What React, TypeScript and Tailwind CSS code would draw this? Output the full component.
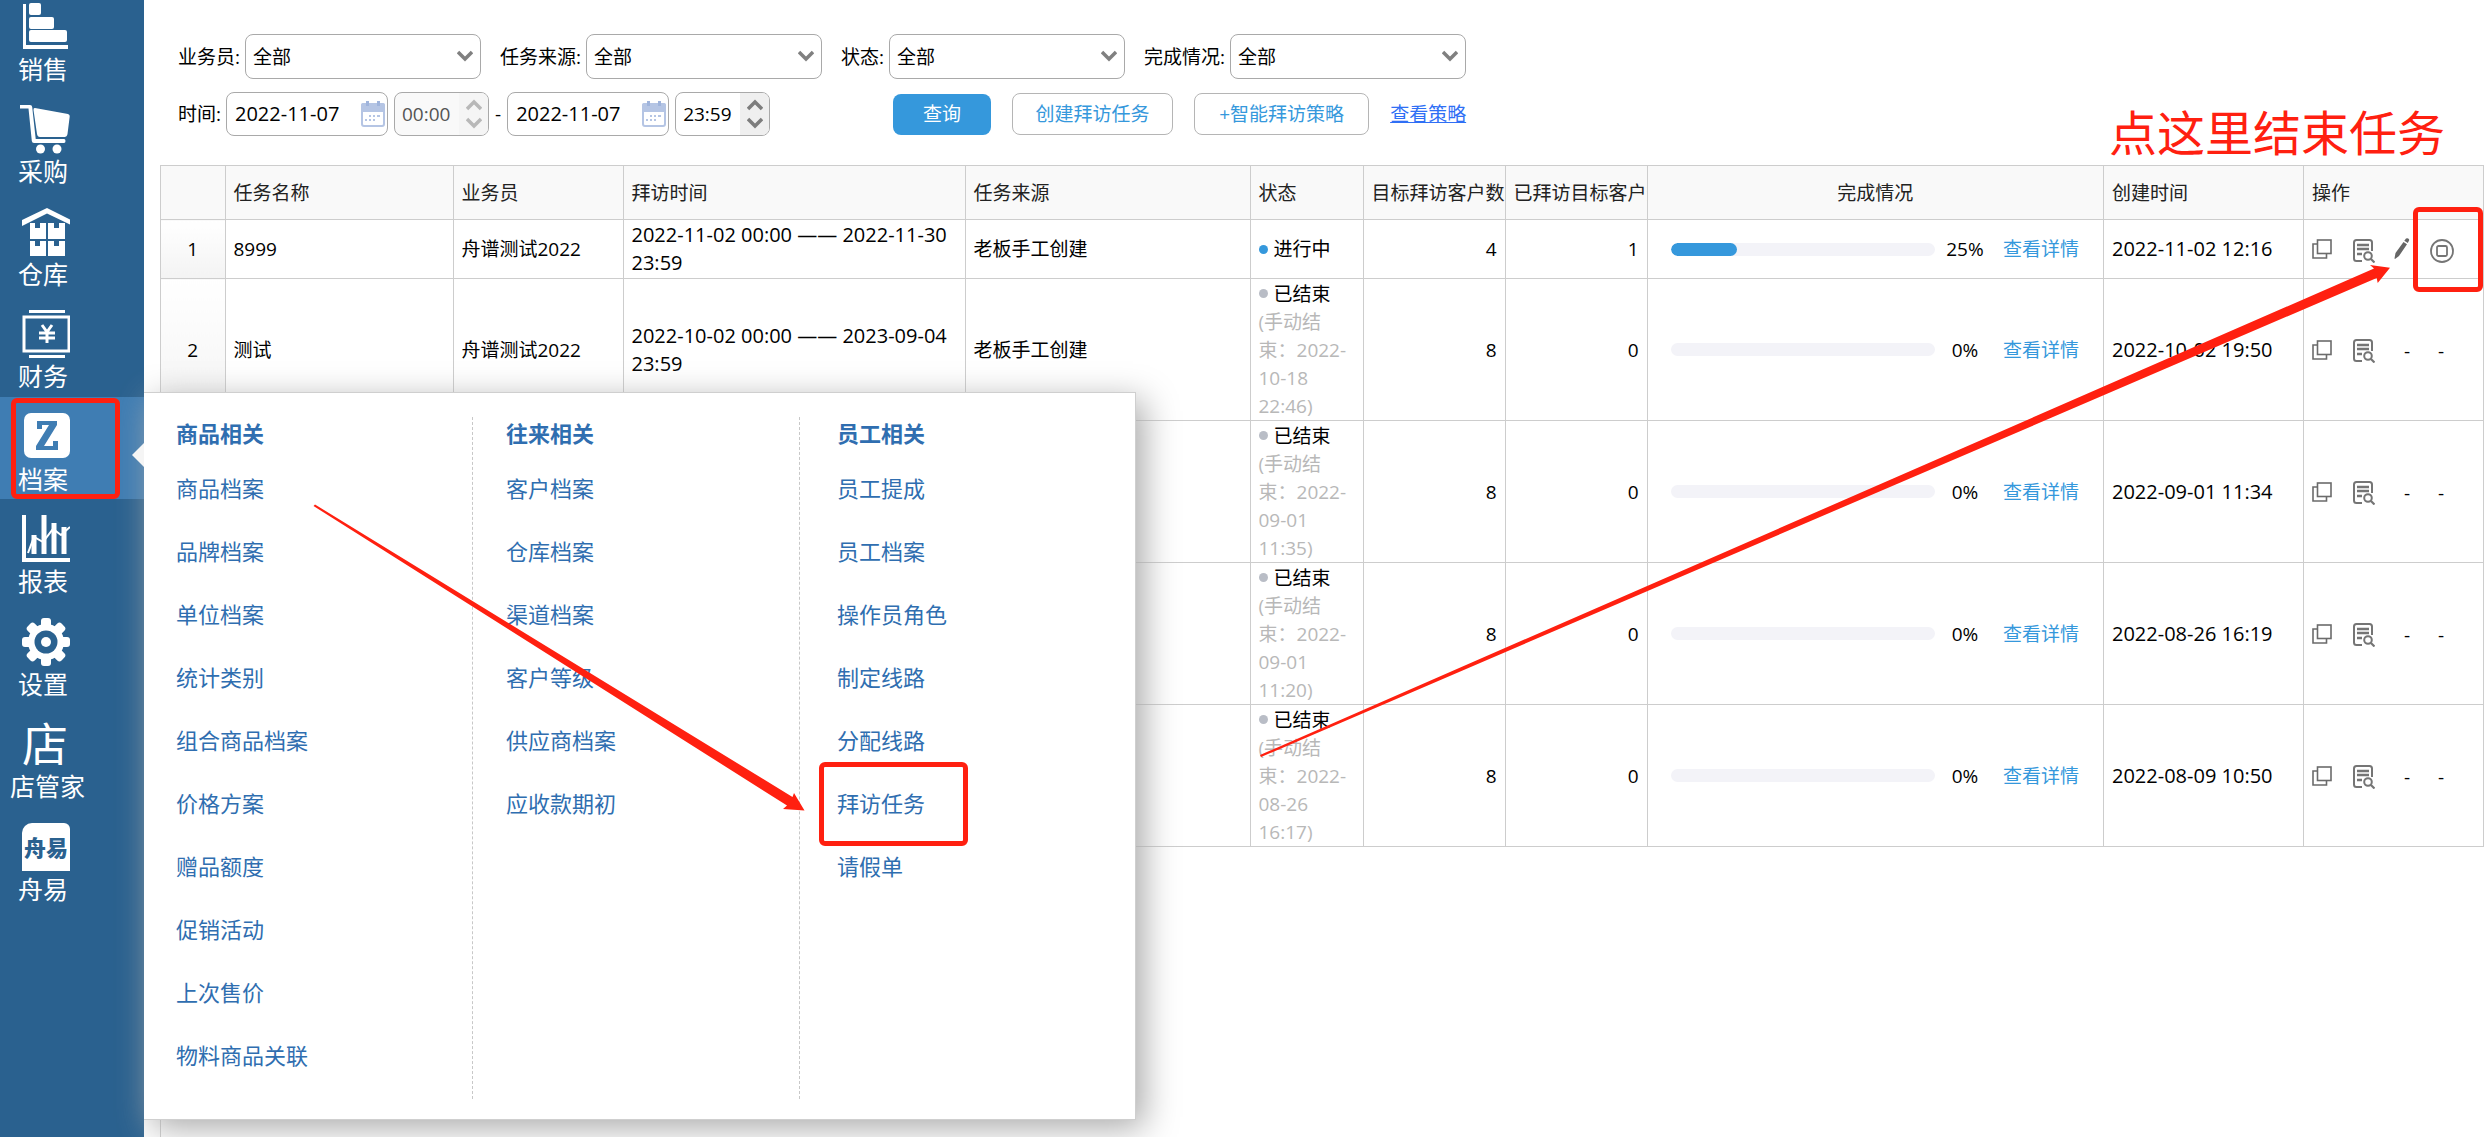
import React from 'react';

type Row = {
    id: number;
    name?: string;
    staff?: string;
    period?: string;
    source?: string;
    ended?: string;
    target: number;
    visited: number;
    percent: number;
    createdAt: string;
};

const rows: Row[] = [
    { id: 1, name: '8999', staff: '舟谱测试2022', period: '2022-11-02 00:00 —— 2022-11-30 23:59', source: '老板手工创建', target: 4, visited: 1, percent: 25, createdAt: '2022-11-02 12:16' },
    { id: 2, name: '测试', staff: '舟谱测试2022', period: '2022-10-02 00:00 —— 2023-09-04 23:59', source: '老板手工创建', ended: '2022-10-18 22:46', target: 8, visited: 0, percent: 0, createdAt: '2022-10-02 19:50' },
    { id: 3, ended: '2022-09-01 11:35', target: 8, visited: 0, percent: 0, createdAt: '2022-09-01 11:34' },
    { id: 4, ended: '2022-09-01 11:20', target: 8, visited: 0, percent: 0, createdAt: '2022-08-26 16:19' },
    { id: 5, ended: '2022-08-26 16:17', target: 8, visited: 0, percent: 0, createdAt: '2022-08-09 10:50' },
];

const menuGroups = [
    { title: '商品相关', style: 'pl-8 border-r', items: ['商品档案', '品牌档案', '单位档案', '统计类别', '组合商品档案', '价格方案', '赠品额度', '促销活动', '上次售价', '物料商品关联'] },
    { title: '往来相关', style: 'pl-[33px] border-r', items: ['客户档案', '仓库档案', '渠道档案', '客户等级', '供应商档案', '应收款期初'] },
    { title: '员工相关', style: 'pl-[37px]', items: ['员工提成', '员工档案', '操作员角色', '制定线路', '分配线路', '拜访任务', '请假单'] },
];

/* ---------- Sidebar icons (48x48 box) ---------- */

const SalesIcon = () => (
    <svg viewBox="0 0 48 48" className="size-12" fill="#fff">
        <path d="M1 1h3v41h42v4H1z" />
        <rect x="7" y="0" width="12" height="12" rx="2" />
        <rect x="7" y="14" width="25" height="12" rx="2" />
        <rect x="7" y="27" width="38" height="12" rx="2" />
    </svg>
);

const CartIcon = () => (
    <svg viewBox="0 0 48 48" className="size-12 overflow-visible" fill="#fff">
        <path d="M-2 0h10q2 0 2.200 2l3.500 32H42q1.500 0 1.500 2t-1.500 2H12q-2 0-2.200-2L6.500 3.500H-2z" />
        <path d="M13 3l33 6q2 .5 1.700 2.500L45.500 29q-.5 3-3 3H18q-2.500 0-3-3L11.500 5q-.2-2.300 1.500-2z" />
        <circle cx="18.500" cy="44" r="4.500" />
        <circle cx="35" cy="44" r="4.500" />
    </svg>
);

const WarehouseIcon = () => (
    <svg viewBox="0 0 48 48" className="size-12" fill="#fff">
        <path d="M25 0l24 12v5L25 5.500 0 18v-6z" />
        <path d="M8 15h5v5h5v-5h6v16H8zM26 15h6v5h5v-5h6v16H26zM8 33h5v5h5v-5h6v15H8zM26 33h6v5h5v-5h6v15H26z" />
    </svg>
);

const FinanceIcon = () => (
    <svg viewBox="0 0 48 48" className="size-12" fill="none" stroke="#fff">
        <path d="M7 1.500h36M7 46.500h36" strokeWidth="3" />
        <rect x="2" y="7" width="45" height="34" strokeWidth="3" />
        <path d="M20 15l5 7 5-7M25 21v12M17 23h16M17 28h16" strokeWidth="3" />
    </svg>
);

const ArchiveIcon = () => (
    <svg viewBox="0 0 48 48" className="size-12">
        <rect x="2" y="0" width="46" height="45" rx="7" fill="#fff" />
        <path d="M15 8h20v4L22 33h9v-5h5v9H14v-4l13-21h-7v4h-5z" fill="#3f7db3" />
    </svg>
);

const ReportIcon = () => (
    <svg viewBox="0 0 48 48" className="size-12" fill="none" stroke="#fff">
        <path d="M2 0v45h46" strokeWidth="4" />
        <path d="M12 39V20M22 39V0M32 39V8M42 39V12" strokeWidth="5" />
        <path d="M6 38l6-16 9 5 10-13 8 6 9-8" strokeWidth="2" />
    </svg>
);

const GearIcon = () => (
    <svg viewBox="0 0 48 48" className="size-12">
        <g fill="#fff">
            <circle cx="24" cy="24" r="18" />
            {[0, 45, 90, 135].map(angle => (
                <rect key={angle} x="19" y="0" width="10" height="48" rx="3" transform={`rotate(${angle} 24 24)`} />
            ))}
        </g>
        <circle cx="24" cy="24" r="11.500" fill="#2a618f" />
        <circle cx="24" cy="24" r="5" fill="#fff" />
    </svg>
);

const StoreIcon = () => <span className="block size-12 text-[46px] leading-[46px] text-white">店</span>;

const ZhouyiIcon = () => (
    <span className="flex size-12 items-center justify-center rounded-tl-[10px] rounded-tr-md bg-white text-[22px] font-black leading-none text-[#2a618f]">
        舟易
    </span>
);

const navItems = [
    { label: '销售', icon: <SalesIcon /> },
    { label: '采购', icon: <CartIcon /> },
    { label: '仓库', icon: <WarehouseIcon /> },
    { label: '财务', icon: <FinanceIcon /> },
    { label: '档案', icon: <ArchiveIcon />, active: true },
    { label: '报表', icon: <ReportIcon /> },
    { label: '设置', icon: <GearIcon /> },
    { label: '店管家', icon: <StoreIcon />, wide: true },
    { label: '舟易', icon: <ZhouyiIcon /> },
];

/* ---------- Small icons ---------- */

const Chevron: React.FC<{ up?: boolean; className?: string }> = ({ up, className }) => (
    <svg viewBox="0 0 16 12" className={`w-4 h-3 ${className || ''}`} fill="none" stroke="currentColor" strokeWidth="3.500">
        {up ? <path d="M1 10l7-7 7 7" /> : <path d="M1 2l7 7 7-7" />}
    </svg>
);

const CalendarIcon = () => (
    <svg viewBox="0 0 24 26" className="w-6 h-[26px]">
        <rect x="1" y="3" width="22" height="22" rx="2" fill="#fff" stroke="#b5c5e4" strokeWidth="2" />
        <path d="M0 4q0-2 2-2h20q2 0 2 2v7H0z" fill="#b5c5e4" />
        <path d="M5 0h3v5H5zM16 0h3v5h-3z" fill="#9fb4dc" />
        <path d="M8 14h2v2H8zM12 14h2v2h-2zM16 14h3v2h-3zM4 18h2v2H4zM8 18h2v2H8zM12 18h2v2h-2z" fill="#b5c5e4" />
    </svg>
);

const CopyIcon = () => (
    <svg viewBox="0 0 20 20" className="size-5" fill="none" stroke="#6b6b6b" strokeWidth="1.600">
        <rect x="5.500" y="1" width="13.500" height="13.500" />
        <path d="M5.500 5H1v14h13.500v-4.500" />
    </svg>
);

const DetailIcon = () => (
    <svg viewBox="0 0 22 24" className="w-[22px] h-6" fill="none" stroke="#757575">
        <path d="M19 12V3.500Q19 1 16.500 1h-13Q1 1 1 3.500v16Q1 22 3.500 22H9" strokeWidth="2" />
        <path d="M4 6h12M4 10h12M4 15h5" strokeWidth="2.400" />
        <circle cx="15" cy="17" r="3.800" strokeWidth="2" />
        <path d="M18 20l3.500 3.500" strokeWidth="2.200" />
    </svg>
);

const PencilIcon = () => (
    <svg viewBox="0 0 16 22" className="w-4 h-[22px]" fill="#666">
        <path d="M9.500 4l3.500 2.200L5 18l-4 3-.5-.5L1.500 15zM10.300 2.800L12 .5q2-.8 3 .8.500 1-.2 1.700L13.800 5z" />
    </svg>
);

const StopIcon = () => (
    <svg viewBox="0 0 24 24" className="size-6" fill="none" stroke="#757575" strokeWidth="1.800">
        <circle cx="12" cy="12" r="11" />
        <rect x="7" y="7" width="10" height="10" rx="1.500" />
    </svg>
);

/* ---------- Form parts ---------- */

const FilterSelect: React.FC<{ id: string; label: string }> = ({ id, label }) => (
    <div className="flex items-center gap-[5px]">
        <label htmlFor={id} className="whitespace-nowrap">{label}:</label>
        <div className="relative">
            <select id={id} className="appearance-none w-[236px] h-[45px] pl-[7px] rounded-lg border border-[#a9a9a9] bg-white text-black">
                <option>全部</option>
            </select>
            <Chevron className="absolute right-2 top-4 text-[#808080] pointer-events-none" />
        </div>
    </div>
);

const DateField: React.FC<{ label: string }> = ({ label }) => (
    <div className="flex items-center w-[162px] h-11 rounded-lg border border-[#a9a9a9] bg-white">
        <input aria-label={label} defaultValue="2022-11-07" className="w-32 pl-2 text-xl bg-transparent outline-none" />
        <button aria-label="选择日期" className="pl-[6px]"><CalendarIcon /></button>
    </div>
);

const TimeField: React.FC<{ label: string; value: string; disabled?: boolean }> = ({ label, value, disabled }) => (
    <div className={`flex w-[95px] h-11 rounded-lg border border-[#a9a9a9] overflow-hidden ${disabled ? 'bg-[#f9f9f9] text-[#545454]' : 'bg-white'}`}>
        <input aria-label={label} defaultValue={value} disabled={disabled} className="w-16 pl-[7px] bg-transparent outline-none" />
        <div className={`flex-1 flex flex-col items-center justify-between py-[6px] ${disabled ? 'bg-[#f5f5f5] text-[#b8b8b8]' : 'bg-[#efefef] text-[#7d7d7d]'}`}>
            <button aria-label="增加" disabled={disabled}><Chevron up className="block" /></button>
            <button aria-label="减少" disabled={disabled}><Chevron className="block" /></button>
        </div>
    </div>
);

/* ---------- Page parts ---------- */

const Sidebar = () => (
    <nav className="w-36 shrink-0 bg-[#2a618f]">
        <ul className="grid auto-rows-fr h-[922px] -mt-[13px]">
            {navItems.map(item => (
                <li key={item.label} className={item.active ? 'relative bg-[#3f7db3]' : 'relative'}>
                    <a href="#" className={`flex flex-col pt-4 text-white text-[25px] leading-9 ${item.wide ? 'pl-[10px]' : 'pl-[18px]'}`}>
                        <span className={item.wide ? 'pl-3' : 'pl-1'}>{item.icon}</span>
                        <span>{item.label}</span>
                    </a>
                    {item.active && <div className="absolute z-30 left-[11px] top-px w-[109px] h-[101px] rounded-md border-5 border-[#ff2010]" />}
                </li>
            ))}
        </ul>
    </nav>
);

const ArchiveMenu = () => (
    <div className="absolute z-20 left-36 top-[392px] w-[992px] h-[728px] bg-white border border-l-0 border-[#cfcfcf] shadow-[8px_8px_32px_#aaaaaa] py-6">
        {/* Pointer towards the active sidebar entry */}
        <div className="absolute -left-3 top-[50px] border-y-[12px] border-r-[12px] border-y-transparent border-r-[#f5f5f5]" />
        <div className="grid grid-cols-[329px_327px_1fr] h-[682px] text-[22px] leading-[31px] text-[#2f6eb0]">
            {menuGroups.map(group => (
                <div key={group.title} className={`border-dashed border-[#c8c8c8] ${group.style}`}>
                    <h3 className="font-bold pt-px mb-6">{group.title}</h3>
                    <ul className="flex flex-col gap-8">
                        {group.items.map(item => (
                            <li key={item} className="relative">
                                <a href="#">{item}</a>
                                {item === '拜访任务' && <div className="absolute -left-[18px] -top-[26px] w-[149px] h-[84px] rounded-md border-5 border-[#ff2010]" />}
                            </li>
                        ))}
                    </ul>
                </div>
            ))}
        </div>
    </div>
);

const TaskTable = () => (
    <table className="w-full table-fixed border-collapse border-t border-[#cdcdcd] text-left leading-7 [&_td]:border [&_td]:border-[#cdcdcd] [&_th]:border [&_th]:border-[#cdcdcd] [&_td]:px-2 [&_th]:px-2 [&_td:first-child]:border-l-0 [&_th:first-child]:border-l-0">
        <colgroup>
            <col className="w-[64px]" />
            <col className="w-[228px]" />
            <col className="w-[170px]" />
            <col className="w-[342px]" />
            <col className="w-[285px]" />
            <col className="w-[113px]" />
            <col className="w-[142px]" />
            <col className="w-[142px]" />
            <col />
            <col className="w-[200px]" />
            <col className="w-[180px]" />
        </colgroup>
        <thead>
            <tr className="h-[54px] bg-[#f9f9f9] text-[#222] whitespace-nowrap [&_th]:font-normal [&_th]:overflow-hidden">
                <th />
                <th>任务名称</th>
                <th>业务员</th>
                <th>拜访时间</th>
                <th>任务来源</th>
                <th>状态</th>
                <th>目标拜访客户数</th>
                <th>已拜访目标客户数</th>
                <th className="text-center">完成情况</th>
                <th>创建时间</th>
                <th>操作</th>
            </tr>
        </thead>
        <tbody>
            {rows.map(row => (
                <tr key={row.id} className={row.ended ? 'h-[142px]' : 'h-[59px]'}>
                    <td className="text-center bg-linear-to-b from-white to-[#f3f3f3]">{row.name && row.id}</td>
                    <td>{row.name}</td>
                    <td>{row.staff}</td>
                    <td className="text-xl leading-7">{row.period}</td>
                    <td>{row.source}</td>
                    <td>
                        <div className="flex items-center gap-[6px] whitespace-nowrap">
                            <span className={`size-[9px] rounded-full ${row.ended ? 'bg-[#b9bdc6]' : 'bg-[#3598dc]'}`} />
                            {row.ended ? '已结束' : '进行中'}
                        </div>
                        {row.ended && <div className="text-[#b8b8b8]">(手动结束：{row.ended})</div>}
                    </td>
                    <td className="text-right">{row.target}</td>
                    <td className="text-right">{row.visited}</td>
                    <td>
                        <div className="flex items-center pl-[15px] pr-4">
                            <div className="flex-1 h-[13px] rounded-full bg-[#f3f3f8] overflow-hidden">
                                <div className="h-full rounded-full bg-[#3598dc]" style={{ width: `${row.percent}%` }} />
                            </div>
                            <span className="w-[60px] text-center">{row.percent}%</span>
                            <a href="#" className="pl-2 text-[#3598dc]">查看详情</a>
                        </div>
                    </td>
                    <td className="text-xl whitespace-nowrap">{row.createdAt}</td>
                    <td>
                        <div className="flex items-center">
                            <button aria-label="复制" className="w-[41px]"><CopyIcon /></button>
                            <button aria-label="详情" className="w-[41px] pt-[3px]"><DetailIcon /></button>
                            {row.ended ? (
                                <>
                                    <span className="w-[34px] pl-[10px] pt-[3px]">-</span>
                                    <span className="pl-[10px] pt-[3px]">-</span>
                                </>
                            ) : (
                                <>
                                    <button aria-label="编辑" className="w-9"><PencilIcon /></button>
                                    <button aria-label="结束任务" className="pt-[3px]"><StopIcon /></button>
                                </>
                            )}
                        </div>
                    </td>
                </tr>
            ))}
        </tbody>
    </table>
);

const Annotations = () => (
    <>
        <p className="absolute z-30 right-10 top-[99px] text-[48px] leading-[68px] text-[#ff2010]">点这里结束任务</p>
        <div className="absolute z-30 right-0.5 top-[207px] w-[70px] h-[85px] rounded-md border-5 border-[#ff2010]" />
        {/* Arrow to the stop button */}
        <svg className="absolute z-30 right-[95px] top-[260px] w-[1132px] h-[500px]" viewBox="1258 260 1132 500" fill="#ff2010">
            <path d="M1260 755L2374 268.500l-4-3.500 20 2.700-12.300 15.300-1-5L1261 757z" />
        </svg>
        {/* Arrow to the menu entry */}
        <svg className="absolute z-30 left-[312px] top-[502px] w-[496px] h-[312px]" viewBox="312 502 496 312" fill="#ff2010">
            <path d="M315 504.500L792.500 797l1.500-4 10.500 17.500L783 809l4-3.500L313.500 506z" />
        </svg>
    </>
);

const App: React.FC = () => (
    <div className='relative flex min-h-screen overflow-hidden bg-white text-[19px] leading-7 text-black font-["Open_Sans","Noto_Sans_CJK_SC",sans-serif]'>
        <Sidebar />
        <main className="flex-1 min-w-0 flex flex-col pl-4 pr-px">
            <form className="flex flex-col gap-[13px] pt-[34px] pl-[18px] pb-[29px]" onSubmit={e => e.preventDefault()}>
                <div className="flex gap-[19px]">
                    <FilterSelect id="staff" label="业务员" />
                    <FilterSelect id="source" label="任务来源" />
                    <FilterSelect id="status" label="状态" />
                    <FilterSelect id="progress" label="完成情况" />
                </div>
                <div className="flex items-center">
                    <span className="pr-[5px]">时间:</span>
                    <div className="flex items-center gap-[6px]">
                        <DateField label="开始日期" />
                        <TimeField label="开始时间" value="00:00" disabled />
                        <span>-</span>
                        <DateField label="结束日期" />
                        <TimeField label="结束时间" value="23:59" />
                    </div>
                    <div className="flex items-center gap-[21px] pl-[123px]">
                        <button type="submit" className="w-[98px] h-[41px] rounded-lg bg-[#3598dc] text-white">查询</button>
                        <button type="button" className="w-[161px] h-[42px] rounded-lg border border-[#b5b5b5] text-[#3598dc]">创建拜访任务</button>
                        <button type="button" className="w-[175px] h-[42px] rounded-lg border border-[#b5b5b5] text-[#3598dc]">+智能拜访策略</button>
                        <a href="#" className="text-[#2f6ff5] underline">查看策略</a>
                    </div>
                </div>
            </form>
            <div className="flex-1 border-l border-[#cdcdcd]">
                <TaskTable />
            </div>
        </main>
        <ArchiveMenu />
        <Annotations />
    </div>
);

export default App;
